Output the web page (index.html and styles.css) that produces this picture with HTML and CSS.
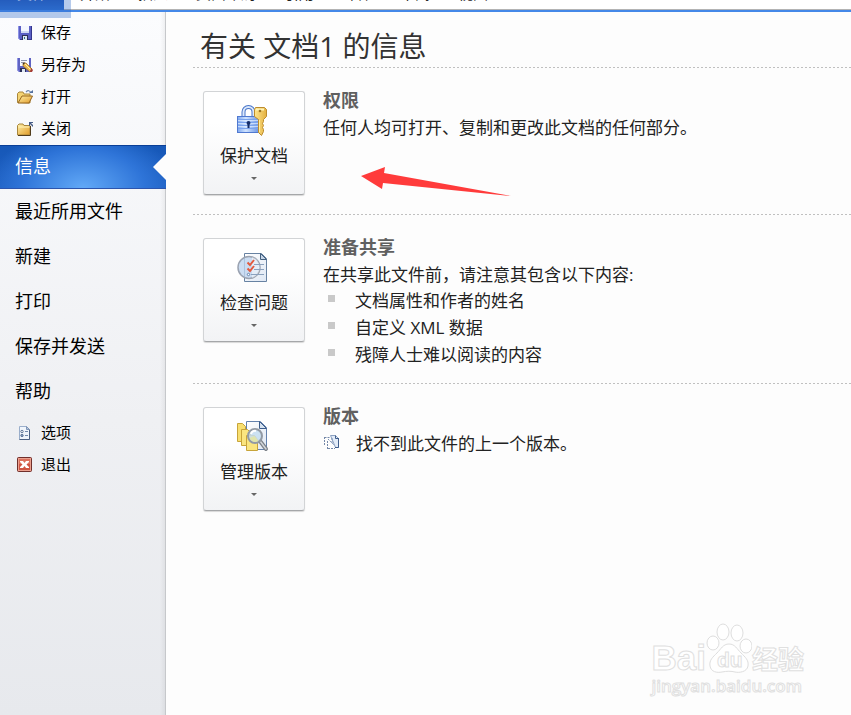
FILE: index.html
```
<!DOCTYPE html>
<html lang="zh-CN">
<head>
    <meta charset="UTF-8">
    <meta name="viewport" content="width=device-width, initial-scale=1.0">
    <title>文档1 - 信息</title>
    <link rel="stylesheet" href="styles.css">
</head>
<body>
    <header class="ribbon">
        <button class="tab tab-file">文件</button>
        <button class="tab">开始</button>
        <button class="tab">插入</button>
        <button class="tab">页面布局</button>
        <button class="tab">引用</button>
        <button class="tab">邮件</button>
        <button class="tab">审阅</button>
        <button class="tab">视图</button>
        <div class="tab-highlight"></div>
    </header>

    <div class="backstage">
        <nav class="sidebar">
            <div class="group">
                <button class="command">
                    <svg class="icon" viewBox="0 0 16 16">
                        <path d="M1 1h14v14H3l-2-2z" fill="#5a5fc4"/>
                        <path d="M1 1h1v12l1 1v1l-2-2z" fill="#8c92e6"/>
                        <path d="M14 1h1v14H3v-1h11z" fill="#34368c"/>
                        <path d="M4 1h8v7H4z" fill="#f4f7ff"/>
                        <path d="M4 6h8v2H4z" fill="#cfd8f4"/>
                        <path d="M5 10h6v5H5z" fill="#2b3056"/>
                        <path d="M6 11h4v4H6z" fill="#dfe8f2"/>
                        <path d="M7 12h1v2H7z" fill="#2f6d88"/>
                    </svg>
                    保存
                </button>
                <button class="command">
                    <svg class="icon" viewBox="0 0 16 16">
                        <path d="M0 1h14v14H2l-2-2z" fill="#5f63c2"/>
                        <path d="M0 1h1v12l1 1v1l-2-2z" fill="#9297e6"/>
                        <path d="M3 1h9v8H3z" fill="#f7f9ff"/>
                        <path d="M4 3.500h6M4 5.500h4" stroke="#8f97ad"/>
                        <path d="M3 11h6v4H3z" fill="#2b3056"/>
                        <path d="M5 12h3v3H5z" fill="#dfe8f2"/>
                        <path d="M6 6l3 0 6 6-2 3-7-6z" fill="#e9b84e" stroke="#9a651f" stroke-width=".7"/>
                        <path d="M8 7l6 6" stroke="#fff0a8"/>
                        <path d="M6 6l2 0-2 2z" fill="#333"/>
                        <path d="M14 11l2 2-1 2-2 0z" fill="#a53b35"/>
                    </svg>
                    另存为
                </button>
                <button class="command">
                    <svg class="icon" viewBox="0 0 16 16">
                        <defs>
                            <linearGradient id="folder" x1="0" y1="0" x2="1" y2="1">
                                <stop offset="0" stop-color="#fff0a8"/>
                                <stop offset="1" stop-color="#e09a28"/>
                            </linearGradient>
                        </defs>
                        <path d="M.5 13.500V4.500L2 3h4l1 2h6v9z" fill="#f4d373" stroke="#a8863c"/>
                        <path d="M1 14l4-7h10.500L12 14z" fill="url(#folder)" stroke="#97661f"/>
                        <path d="M9 3q3-3 5 1" fill="none" stroke="#6f87ad" stroke-width="1.200"/>
                        <path d="M12 4h4V1z" fill="#52709f"/>
                    </svg>
                    打开
                </button>
                <button class="command">
                    <svg class="icon" viewBox="0 0 16 16">
                        <path d="M.5 14V4.500L2 3h4l1 1.500h6V14z" fill="url(#folder)" stroke="#a8863c"/>
                        <path d="M1 14.500h12.500V5" fill="none" stroke="#513c1c"/>
                        <path d="M1.500 6h11" stroke="#fff3b8"/>
                        <path d="M12 1h4v1h-2l2 2v2l-3-3v2h-1z" fill="#465c86"/>
                    </svg>
                    关闭
                </button>
            </div>

            <button class="place active">信息</button>
            <button class="place">最近所用文件</button>
            <button class="place">新建</button>
            <button class="place">打印</button>
            <button class="place">保存并发送</button>
            <button class="place">帮助</button>

            <div class="group group-bottom">
                <button class="command">
                    <svg class="icon" viewBox="0 0 16 16">
                        <path d="M2.500 1.500h7l3 3v10h-10z" fill="#f0f5fc" stroke="#9aaecb"/>
                        <path d="M12.500 4.500v10h-10" fill="none" stroke="#4d6285"/>
                        <path d="M9.500 1.500v3h3z" fill="#b6c6df" stroke="#8096b7"/>
                        <circle cx="5" cy="6.500" r="1.200" fill="#fff" stroke="#5f7699"/>
                        <circle cx="5" cy="10.500" r="1.200" fill="#8298b9" stroke="#5f7699"/>
                        <path d="M8 6.500h3M8 10.500h3" stroke="#7088ac"/>
                    </svg>
                    选项
                </button>
                <button class="command">
                    <svg class="icon" viewBox="0 0 16 16">
                        <rect x=".5" y=".5" width="14" height="14" rx="1" fill="#cf5543" stroke="#702f2b"/>
                        <rect x="1.500" y="1.500" width="12" height="12" fill="none" stroke="#eba08f"/>
                        <path d="M2 2h11v5H2z" fill="#e48370" opacity=".6"/>
                        <path d="M3 4h3l1.500 2L9 4h3v1L9.500 7.500 12 10v1H9L7.500 9 6 11H3v-1l2.500-2.500L3 5z" fill="#fff"/>
                    </svg>
                    退出
                </button>
            </div>
        </nav>

        <main class="content">
            <h1>有关 文档1 的信息</h1>

            <section class="info">
                <button class="tile">
                    <svg class="tile-icon" viewBox="0 0 32 32">
                        <defs>
                            <linearGradient id="lock" x1="0" y1="0" x2="1" y2="0">
                                <stop offset="0" stop-color="#7fa8ef"/>
                                <stop offset=".4" stop-color="#cfe3ff"/>
                                <stop offset="1" stop-color="#6d95e4"/>
                            </linearGradient>
                            <linearGradient id="key" x1="0" y1="0" x2="1" y2="0">
                                <stop offset="0" stop-color="#ffe68d"/>
                                <stop offset="1" stop-color="#e3b040"/>
                            </linearGradient>
                        </defs>
                        <path d="M6.500 12V7a5 5 0 0 1 10 0v5" fill="none" stroke="#4a76c9" stroke-width="4"/>
                        <path d="M6.500 12V7a5 5 0 0 1 10 0v5" fill="none" stroke="#dbe8fc" stroke-width="2"/>
                        <rect x=".5" y="11.500" width="21" height="16" fill="url(#lock)" stroke="#5079d0"/>
                        <path d="M1 14.500h20M1 17.500h20M1 20.500h20M1 23.500h20" stroke="#7ba4ed"/>
                        <path d="M1 15.500h20M1 18.500h20M1 21.500h20" stroke="#e0edff" opacity=".7"/>
                        <path d="M11.500 16a2 2 0 0 1 2 2l-1 2v3h-2v-3l-1-2a2 2 0 0 1 2-2z" fill="#152e69"/>
                        <path d="M18.500 2.500h9l2 2v7l-3 3v2l-1 2 1 2-1 2 1 2v2l-2 4-3-3V14.500l-4-3v-7z" fill="url(#key)" stroke="#bd8c2d"/>
                        <path d="M19 4.500h8" stroke="#fff4b8" stroke-width="2"/>
                        <circle cx="23" cy="6" r="1.300" fill="#9c7421"/>
                        <path d="M22.500 15v12" stroke="#fff0a1"/>
                    </svg>
                    <span class="tile-label">保护文档</span>
                    <span class="caret"></span>
                </button>
                <div class="details">
                    <h2>权限</h2>
                    <p>任何人均可打开、复制和更改此文档的任何部分。</p>
                </div>
                <svg class="pointer" viewBox="0 0 150 30">
                    <path d="M0 9L24 0 23 6 150 29 22 16 21 22z" fill="#ff3b3b"/>
                </svg>
            </section>

            <section class="info">
                <button class="tile">
                    <svg class="tile-icon" viewBox="0 0 32 32">
                        <defs>
                            <linearGradient id="paper" x1="0" y1="0" x2="1" y2="1">
                                <stop offset="0" stop-color="#ffffff"/>
                                <stop offset="1" stop-color="#dfe8f4"/>
                            </linearGradient>
                        </defs>
                        <path d="M7.500 1.500h17l5 5v23h-22z" fill="url(#paper)" stroke="#6782a2"/>
                        <path d="M23.500 1.500v6h6z" fill="#c7d6e8" stroke="#45617f"/>
                        <circle cx="12" cy="15.500" r="11" fill="#bfd4ef" fill-opacity=".8" stroke="#9ba3b1" stroke-width="1.500"/>
                        <path d="M15 5a11 11 0 0 1 0 21z" fill="#fff" opacity=".5"/>
                        <path d="M17 12.500h10M17 17.500h10M14 22.500h13" stroke="#8ba1bd"/>
                        <path d="M10.500 10.500l2.500 2.500 4-5M10.500 16.500l2.500 2.500 4-5" fill="none" stroke="#e35a3e" stroke-width="2"/>
                        <circle cx="11.500" cy="22.500" r="1.200" fill="#fff" stroke="#6484ad"/>
                    </svg>
                    <span class="tile-label">检查问题</span>
                    <span class="caret"></span>
                </button>
                <div class="details">
                    <h2>准备共享</h2>
                    <p>在共享此文件前，请注意其包含以下内容:</p>
                    <ul>
                        <li>文档属性和作者的姓名</li>
                        <li>自定义 XML 数据</li>
                        <li>残障人士难以阅读的内容</li>
                    </ul>
                </div>
            </section>

            <section class="info">
                <button class="tile">
                    <svg class="tile-icon" viewBox="0 0 32 32">
                        <path d="M.5 2.500h5l3 3v15h-8z" fill="#f8df70" stroke="#c7a43a"/>
                        <path d="M9.500 .5h14l6 6v22h-20z" fill="url(#paper)" stroke="#6482ad"/>
                        <path d="M22.500 .5v7h7z" fill="#d6e2f0" stroke="#3d5d8b"/>
                        <path d="M4.500 8.500h6l3 3v13h-9z" fill="#fae57f" stroke="#c7a43a"/>
                        <path d="M9.500 14.500h8l3 4v11h-11z" fill="#fae57f" stroke="#c7a43a"/>
                        <path d="M23 20l6 8" stroke="#7b8188" stroke-width="4" stroke-linecap="round"/>
                        <path d="M23 20l6 8" stroke="#d2d6da" stroke-width="1.500" stroke-linecap="round"/>
                        <circle cx="18" cy="15" r="7" fill="#c6def1" fill-opacity=".85" stroke="#929aa4" stroke-width="2"/>
                        <path d="M12.500 17l5-2 4 5a6 6 0 0 1-9-3z" fill="#e5e6a0" opacity=".8"/>
                        <path d="M14 13a4 4 0 0 1 5-3" fill="none" stroke="#fff" stroke-width="2"/>
                    </svg>
                    <span class="tile-label">管理版本</span>
                    <span class="caret"></span>
                </button>
                <div class="details">
                    <h2>版本</h2>
                    <p class="version">
                        <svg class="icon" viewBox="0 0 16 16">
                            <path d="M6.500 1.500h5l3 3v9h-3z" fill="#e2ebf7" stroke="#8ba0c0"/>
                            <path d="M14.500 4v9.500H11" fill="none" stroke="#3f5d8b"/>
                            <path d="M11.500 1.500v3h3" fill="none" stroke="#3f5d8b"/>
                            <path d="M.5 3.500h5M.5 3v9M3.500 7v8M4 14.500h7" fill="none" stroke="#7488a8" stroke-dasharray="2 1"/>
                            <path d="M4 5l6 6M8 4v6" stroke="#7b91b5" stroke-dasharray="2 1"/>
                        </svg>
                        找不到此文件的上一个版本。
                    </p>
                </div>
            </section>
        </main>
    </div>

    <div class="watermark">
        <div class="brand">
            <span class="brand-latin">Bai</span>
            <span class="paw">
                <svg viewBox="0 0 46 52">
                    <ellipse cx="7" cy="20" rx="6" ry="7"/>
                    <ellipse cx="17" cy="9" rx="6" ry="8"/>
                    <ellipse cx="31" cy="10" rx="6" ry="8"/>
                    <ellipse cx="40" cy="23" rx="6" ry="7"/>
                    <path d="M23 21c-6 0-8 5-12 9s-8 7-7 13 7 7 12 6 9-1 13 0 12 0 13-6-3-9-7-13-6-9-12-9z"/>
                </svg>
                <span class="paw-text">du</span>
            </span>
            <span class="brand-cn">经验</span>
        </div>
        <div class="site">jingyan.baidu.com</div>
    </div>
</body>
</html>
```

FILE: styles.css
```
* {
    box-sizing: border-box;
}
body {
    margin: 0;
    min-height: 100vh;
    display: flex;
    flex-direction: column;
    position: relative;
    background: #fdfdfd;
    color: #222;
    font-family: "Open Sans", "Noto Sans CJK SC", sans-serif;
    font-size: 17px;
    line-height: 27px;
}
button {
    margin: 0;
    padding: 0;
    border: none;
    background: none;
    color: inherit;
    font-family: inherit;
    cursor: pointer;
}
h1, h2, p, ul {
    margin: 0;
    padding: 0;
}

/* Faixa de guias */
.ribbon {
    position: relative;
    display: flex;
    align-items: flex-end;
    height: 12px;
    background: #fff;
    border-bottom: 2px solid #4488e8;
    box-shadow: inset 0 -1px 0 #b3b3b3;
}
.tab {
    height: 26px;
    padding: 0 14px 8px;
    font-size: 15px;
    line-height: 18px;
}
.tab-file {
    width: 64px;
    margin-right: 2px;
    padding: 0 0 8px;
    background: linear-gradient(#1d4fb0 50%, #2b6ccd);
    color: #fff;
}
.tab-highlight {
    position: absolute;
    top: 0;
    left: 0;
    width: 71px;
    height: 18px;
    background: rgba(45, 105, 200, 0.35);
    pointer-events: none;
}

.backstage {
    flex: 1;
    display: flex;
}

/* Menu lateral */
.sidebar {
    width: 166px;
    flex-shrink: 0;
    padding-top: 4px;
    background: linear-gradient(to right, transparent 160px, rgba(0, 0, 0, 0.06)), linear-gradient(#fbfcfe, #eff0f3 58%, #e7e9ed);
    box-shadow: inset -1px 0 0 #c6c8cb;
    color: #000;
}
.group {
    margin-bottom: 1px;
}
.group-bottom {
    margin-top: 2px;
}
.command {
    display: flex;
    align-items: center;
    gap: 8px;
    width: 100%;
    height: 32px;
    padding: 0 0 2px 17px;
    font-size: 15px;
}
.icon {
    width: 16px;
    height: 16px;
    flex-shrink: 0;
}
.command .icon {
    margin-top: 4px;
}
.place {
    display: block;
    width: 100%;
    height: 45px;
    padding: 0 0 4px 15px;
    font-size: 18px;
    text-align: left;
}
.active {
    position: relative;
    height: 44px;
    border-top: 1px solid #0a3f97;
    border-bottom: 1px solid #2c55ad;
    background: radial-gradient(ellipse 95px 60px at 50% 100%, #62a9f7, #2e74d8 65%, transparent), linear-gradient(#1658b8, #1f60c2);
    color: #fff;
}
.active::after {
    content: "";
    position: absolute;
    top: 8px;
    right: 0;
    border: 13px solid transparent;
    border-left: none;
    border-right-color: #fdfdfd;
}

/* Painel de informações */
.content {
    flex: 1;
    padding-left: 27px;
}
h1 {
    height: 55px;
    padding: 14px 0 0 7px;
    color: #333;
    font-size: 28px;
    font-weight: normal;
    line-height: 40px;
}
.info {
    position: relative;
    display: flex;
    gap: 18px;
    padding: 21px 10px 13px;
    background: repeating-linear-gradient(to right, #c0c0c0 0 2px, transparent 2px 4px) top / 100% 1px no-repeat;
}
.tile {
    display: flex;
    flex-direction: column;
    align-items: center;
    width: 102px;
    height: 104px;
    margin: 3px 0 6px;
    padding: 13px 2px 0 0;
    flex-shrink: 0;
    border: 1px solid #d2d4d6;
    border-bottom-color: #a5a7a9;
    border-radius: 3px;
    background: linear-gradient(#fff 30%, #f2f3f5);
    box-shadow: 0 1px 1px rgba(0, 0, 0, 0.15);
}
.tile-icon {
    width: 32px;
    height: 32px;
}
.tile-label {
    margin: 7px 0 9px;
    padding-left: 2px;
    font-size: 17px;
    line-height: 24px;
}
.caret {
    margin-left: 2px;
    border: 3px solid transparent;
    border-top-color: #666;
    border-bottom: none;
}
.details {
    margin: -1px 0 1px;
}
h2 {
    color: #606060;
    font-size: 18px;
    line-height: 27px;
}
ul {
    margin: -1px 0 1px;
    list-style: none;
}
li {
    display: flex;
    align-items: center;
    gap: 20px;
    padding-left: 5px;
}
li::before {
    content: "";
    width: 7px;
    height: 7px;
    margin-bottom: 4px;
    background: #c9c9c9;
}
.version {
    display: flex;
    align-items: center;
    gap: 16px;
}
.version .icon {
    margin: 0 0 3px 1px;
}

/* Seta vermelha sobre a primeira seção */
.pointer {
    position: absolute;
    top: 100px;
    left: 168px;
    width: 150px;
    height: 30px;
}

/* Marca d'água */
.watermark {
    position: absolute;
    right: 47px;
    bottom: 18px;
    color: #fff;
    font-weight: bold;
    -webkit-text-stroke: 1px #e0e0e0;
    pointer-events: none;
}
.brand {
    display: flex;
    align-items: flex-end;
    height: 52px;
}
.brand-latin {
    font-family: "Liberation Sans", sans-serif;
    font-size: 35px;
    line-height: 34px;
}
.paw {
    position: relative;
    width: 46px;
    height: 52px;
}
.paw svg {
    display: block;
    fill: #fff;
    stroke: #dedede;
}
.paw-text {
    position: absolute;
    top: 25px;
    left: 11px;
    font-family: "Liberation Sans", sans-serif;
    font-size: 21px;
    line-height: 24px;
}
.brand-cn {
    font-size: 26px;
    line-height: 32px;
}
.site {
    font-size: 17px;
    font-weight: 600;
    line-height: 22px;
}
```
